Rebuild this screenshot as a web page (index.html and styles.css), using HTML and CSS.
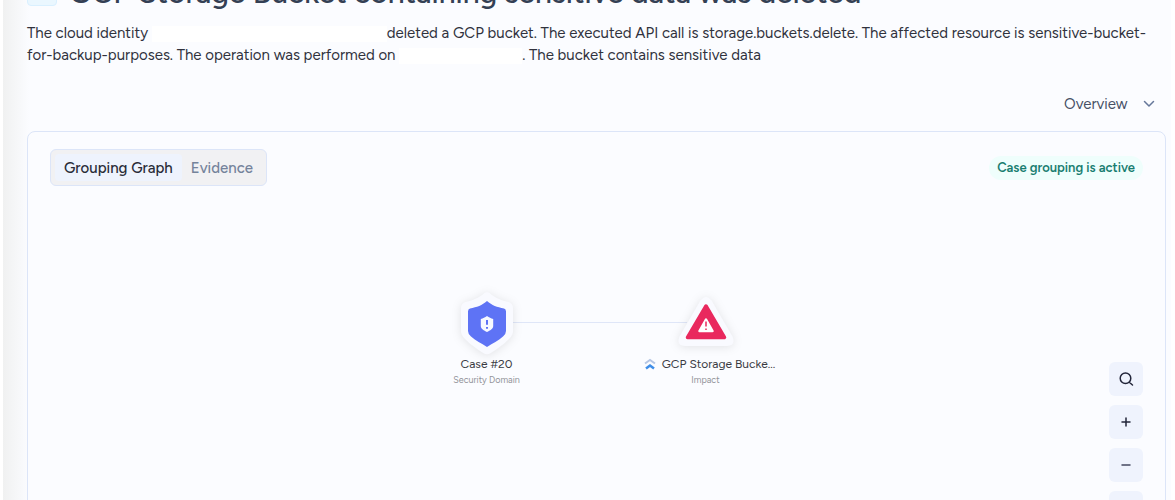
FILE: index.html
```html
<!DOCTYPE html>
<html lang="en">
<head>
  <meta charset="UTF-8">
  <meta name="viewport" content="width=device-width, initial-scale=1.0">
  <title>Case #20</title>
  <link rel="stylesheet" href="styles.css">
</head>
<body>
  <main class="page">
    <header class="title-row">
      <span class="title-icon"></span>
      <h1>GCP Storage Bucket containing sensitive data was deleted</h1>
    </header>

    <p class="description">
      The cloud identity <span class="redacted identity"></span>deleted a GCP bucket. The executed API call is storage.buckets.delete. The affected resource is sensitive-bucket-for-backup-purposes. The operation was performed on <span class="redacted date"></span>. The bucket contains sensitive data
    </p>

    <div class="view-row">
      <select class="view-select" aria-label="View">
        <option>Overview</option>
      </select>
      <svg class="chevron" width="12" height="8" viewBox="0 0 12 8">
        <path d="M1.5 1.5 6 6l4.500-4.500" fill="none" stroke="#66779a" stroke-width="1.500" stroke-linecap="round" stroke-linejoin="round"/>
      </svg>
    </div>

    <section class="card">
      <div class="card-header">
        <div class="tabs">
          <button class="tab active" type="button">Grouping Graph</button>
          <button class="tab" type="button">Evidence</button>
        </div>
        <span class="status">Case grouping is active</span>
      </div>

      <div class="graph">
        <div class="edge"></div>

        <div class="node node-case">
          <svg class="node-shape" width="60" height="66" viewBox="0 0 60 66">
            <path d="M27 3.500Q30 1 33 3.500C38 7.500 43 10 51 12Q56 13 56 18.500V41Q56 45 52 49C46 55 40 59 33 63.500Q30 65 27 63.500C20 59 14 55 8 49Q4 45 4 41V18.500Q4 13 9 12C17 10 22 7.500 27 3.500Z" fill="#f9faff"/>
            <path d="M30 11C35 15.500 40 17 47 18.500Q49 19 49 21.500V41Q49 44 46 46.500C41 51 36 53 30 57C24 53 19 51 14 46.500Q11 44 11 41V21.500Q11 19 13 18.500C20 17 25 15.500 30 11Z" fill="#5e73f5"/>
            <path d="M30 26C32 27.700 34 28.300 36.200 29V36C36.200 39 33 40.500 30 42C27 40.500 23.800 39 23.800 36V29C26 28.300 28 27.700 30 26Z" fill="#f7f9ff"/>
            <path d="M30 30V34.700M30 37V38.800" stroke="#5e73f5" stroke-width="2"/>
          </svg>
          <div class="node-name">Case #20</div>
          <div class="node-type">Security Domain</div>
        </div>

        <div class="node node-alert">
          <svg class="node-shape" width="60" height="66" viewBox="0 0 60 66">
            <path d="M24.500 10.500Q30 3.500 35.500 10.500L56.500 46.500Q60 56 51 56H9Q0 56 3.500 46.500Z" fill="#f9faff"/>
            <path d="M30 16 48.500 47.500H11.500Z" fill="#e9285e" stroke="#e9285e" stroke-width="3.500" stroke-linejoin="round"/>
            <path d="M30 29.500 36.500 41H23.500Z" fill="#fff" stroke="#fff" stroke-width="2.500" stroke-linejoin="round"/>
            <path d="M30 31.500V36.500M30 38.500V40" stroke="#e9285e" stroke-width="1.500"/>
          </svg>
          <div class="node-name">
            <svg class="severity" width="12" height="12" viewBox="0 0 12 12">
              <path d="M1 5.500 6 2l5 3.500" fill="none" stroke="#b5c6e4" stroke-width="2"/>
              <path d="M2 10.500 6 7.500l4 3" fill="none" stroke="#3f8ee8" stroke-width="2.500"/>
            </svg>
            GCP Storage Bucke...
          </div>
          <div class="node-type">Impact</div>
        </div>

        <div class="controls">
          <button class="control" type="button" aria-label="Search">
            <svg width="16" height="16" viewBox="0 0 16 16"><path d="M7.500 2a5.300 5.300 0 1 0 0 10.600a5.300 5.300 0 0 0 0-10.600ZM11 11l3.500 3" fill="none" stroke="#23263a" stroke-width="1.500" stroke-linecap="round"/></svg>
          </button>
          <button class="control" type="button" aria-label="Zoom in">
            <svg width="16" height="16" viewBox="0 0 16 16"><path d="M4 8h8M8 4v8" stroke="#23263a" stroke-width="1.500" stroke-linecap="round"/></svg>
          </button>
          <button class="control" type="button" aria-label="Zoom out">
            <svg width="16" height="16" viewBox="0 0 16 16"><path d="M4 8h8" stroke="#454a60" stroke-width="1.500" stroke-linecap="round"/></svg>
          </button>
          <button class="control" type="button" aria-label="Fit to view"></button>
        </div>
      </div>
    </section>
  </main>
</body>
</html>
```
FILE: styles.css
```css
* {
  box-sizing: border-box;
}

body {
  margin: 0;
  height: 100vh;
  overflow: hidden;
  padding: 0 4px 0 3px;
  background: #fff;
  color: #30323d;
  font-family: Figtree, Lato, sans-serif;
}

button,
select {
  font-family: inherit;
}

.page {
  min-height: 100vh;
  padding: 0 5px 0 24px;
  background: linear-gradient(to right, #f0f1f1, #fbfcff 26px);
}

.title-row {
  display: flex;
  align-items: flex-start;
  gap: 12px;
  height: 30px;
  margin-top: -24px;
}

.title-icon {
  width: 30px;
  height: 30px;
  border: 1px solid #d9f0ff;
  border-radius: 4px;
  background: #eaf7ff;
}

h1 {
  margin: 0;
  color: #344054;
  font-size: 30px;
  font-weight: 500;
  line-height: 34px;
  white-space: nowrap;
}

.description {
  margin: 16px 0 0;
  font-size: 15px;
  line-height: 22px;
}

.redacted {
  display: inline-block;
  height: 16px;
  background: #fff;
  vertical-align: middle;
}

.identity {
  width: 235px;
}

.date {
  width: 123px;
}

.view-row {
  display: flex;
  align-items: center;
  justify-content: flex-end;
  gap: 15px;
  margin: 26px 11px 0 0;
  height: 24px;
}

.view-select {
  appearance: none;
  padding: 0;
  border: 0;
  background: none;
  color: #475066;
  font-size: 15px;
}

.card {
  margin-top: 15px;
  border: 1px solid #dce5f8;
  border-radius: 8px;
  background: #fbfcff;
}

.card-header {
  display: flex;
  align-items: center;
  justify-content: space-between;
  padding: 17px 22px 0;
}

.tabs {
  display: flex;
  padding: 4px;
  border: 1px solid #dce5f8;
  border-radius: 6px;
  background: #f1f1f3;
}

.tab {
  height: 27px;
  padding: 0 9px;
  border: 0;
  border-radius: 4px;
  background: none;
  color: #75839b;
  font-size: 15px;
  font-weight: 500;
}

.tab.active {
  background: #eef3fd;
  color: #292c38;
}

.status {
  padding: 0 8px;
  border-radius: 12px;
  background: #effefc;
  color: #187d70;
  font-size: 13px;
  font-weight: 600;
  line-height: 24px;
}

.graph {
  position: relative;
  height: 400px;
}

.edge {
  position: absolute;
  top: 136px;
  left: calc(50% - 90px);
  width: 180px;
  height: 1px;
  background: #dfe6f8;
}

.node {
  position: absolute;
  top: 104px;
  width: 180px;
  text-align: center;
}

.node-case {
  left: calc(50% - 200px);
}

.node-alert {
  left: calc(50% + 19px);
}

.node-shape {
  display: block;
  margin: 0 auto;
  overflow: visible;
  filter: drop-shadow(0 1px 5px rgba(0, 0, 0, 0.1));
}

.node-name {
  display: flex;
  align-items: center;
  justify-content: center;
  gap: 6px;
  color: #393a42;
  font-size: 12px;
  line-height: 16px;
  white-space: nowrap;
}

.node-alert .node-name {
  padding-left: 8px;
}

.node-type {
  color: #929399;
  font-size: 9px;
  line-height: 16px;
}

.controls {
  position: absolute;
  top: 176px;
  right: 22px;
  display: grid;
  gap: 9px;
}

.control {
  display: grid;
  place-items: center;
  width: 34px;
  height: 34px;
  padding: 0;
  border: 0;
  border-radius: 6px;
  background: #eff3fd;
}
```
